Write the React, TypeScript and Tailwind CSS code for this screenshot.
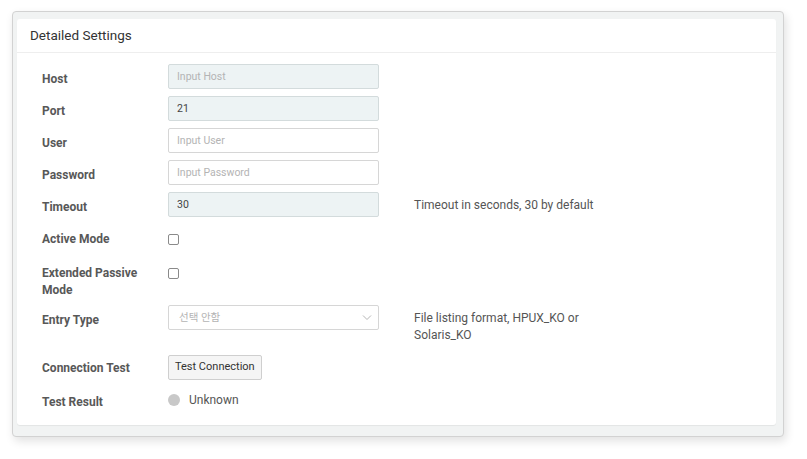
import type { ReactNode } from 'react'

const font = { fontFamily: 'Roboto, "Noto Sans CJK KR", sans-serif' }

interface RowProps {
  label: ReactNode
  children?: ReactNode
  help?: ReactNode
  className?: string
}

function Row({ label, children, help, className = '' }: RowProps) {
  return (
    <div className={`flex items-start ${className}`}>
      <div className="w-[126px] shrink-0 pt-[7px] text-[12px] font-bold leading-[17px] text-[#585858]">
        {label}
      </div>
      <div className="w-[211px] shrink-0">{children}</div>
      {help && (
        <div className="ml-[35px] w-[180px] pb-[2px] pt-[5px] text-[12px] leading-[17px] text-[#555]">{help}</div>
      )}
    </div>
  )
}

function TextInput({ value, placeholder, disabled }: { value?: string; placeholder?: string; disabled?: boolean }) {
  return (
    <div
      className={`flex h-[25px] items-center rounded-[2px] border px-[8px] text-[10.5px] ${
        disabled ? 'border-[#d3dbdc] bg-[#edf3f4]' : 'border-[#d6d6d6] bg-white'
      }`}
    >
      {value ? <span className="text-[#444]">{value}</span> : <span className="text-[#b4b4b4]">{placeholder}</span>}
    </div>
  )
}

function Checkbox() {
  return <div className="mt-[10px] size-[11px] rounded-[2px] border border-[#8a8a8a] bg-white" />
}

export default function App() {
  return (
    <div className="min-h-[459px] bg-white pl-[12px] pt-[11px]" style={font}>
      <div className="w-[772px] rounded-[4px] border border-[#d2d2d2] bg-[#f1f3f3] pb-[11px] pl-[4px] pr-[7px] pt-[7px] shadow-[2px_4px_10px_rgba(0,0,0,0.12)]">
        <div className="rounded-[3px] bg-white shadow-[0_1px_1px_rgba(0,0,0,0.06)]">
          <div className="flex h-[34px] items-center border-b border-[#eeeeee] px-[13px] text-[13.5px] text-[#333]">
            Detailed Settings
          </div>
          <div className="pb-[13px] pl-[25px] pt-[11px]">
            <Row label="Host">
              <TextInput placeholder="Input Host" disabled />
            </Row>
            <Row label="Port" className="mt-[7px]">
              <TextInput value="21" disabled />
            </Row>
            <Row label="User" className="mt-[7px]">
              <TextInput placeholder="Input User" />
            </Row>
            <Row label="Password" className="mt-[7px]">
              <TextInput placeholder="Input Password" />
            </Row>
            <Row label="Timeout" className="mt-[7px]" help="Timeout in seconds, 30 by default">
              <TextInput value="30" disabled />
            </Row>
            <Row label="Active Mode" className="mt-[7px] h-[27px]">
              <Checkbox />
            </Row>
            <Row label={<>Extended Passive<br />Mode</>} className="mt-[7px] h-[40px]">
              <Checkbox />
            </Row>
            <Row
              label="Entry Type"
              className="mt-[7px]"
              help={<>File listing format, HPUX_KO or<br />Solaris_KO</>}
            >
              <div className="flex h-[25px] items-center justify-between rounded-[2px] border border-[#d6d6d6] bg-white pl-[10px] pr-[6px] text-[10.5px] text-[#b4b4b4]">
                <span>선택 안함</span>
                <svg width="10" height="6" viewBox="0 0 10 6" fill="none" stroke="#b5b5b5" strokeWidth="1">
                  <path d="M1 0.5 5 4.5 9 0.5" />
                </svg>
              </div>
            </Row>
            <Row label="Connection Test" className="mt-[7px]">
              <button className="h-[25px] rounded-[2px] border border-[#cfcfcf] bg-[#f5f5f5] px-[6px] text-[11px] text-[#333]">
                Test Connection
              </button>
            </Row>
            <Row label="Test Result" className="mt-[7px]">
              <div className="flex h-[25px] items-center pt-[2px]">
                <span className="size-[12px] rounded-full bg-[#c8c8c8]" />
                <span className="ml-[9px] text-[12px] text-[#555]">Unknown</span>
              </div>
            </Row>
          </div>
        </div>
      </div>
    </div>
  )
}
